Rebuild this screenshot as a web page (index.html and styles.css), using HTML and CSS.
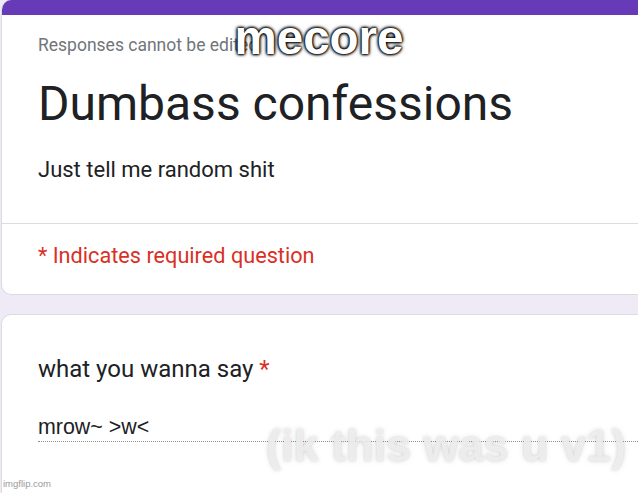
FILE: index.html
```html
<!DOCTYPE html>
<html>
<head>
<meta charset="utf-8">
<link rel="stylesheet" href="styles.css">
</head>
<body>
<div class="page">
  <section class="card header-card">
    <div class="accent"></div>
    <div class="header-body">
      <p class="notice">Responses cannot be edited</p>
      <h1 class="title">Dumbass confessions</h1>
      <p class="desc">Just tell me random shit</p>
    </div>
    <div class="required-row">
      <span class="required">* Indicates required question</span>
    </div>
  </section>
  <section class="card question-card">
    <div class="question">what you wanna say <span class="star">*</span></div>
    <div class="answer">mrow~ &gt;w&lt;</div>
  </section>
</div>
<div class="meme-top">mecore</div>
<div class="meme-bottom">(ik this was u v1)</div>
<div class="watermark">imgflip.com</div>
</body>
</html>
```
FILE: styles.css
```css
html, body {
  margin: 0;
  padding: 0;
}
body {
  width: 638px;
  height: 493px;
  overflow: hidden;
  background: #eeebf7;
  font-family: Roboto, "Liberation Sans", Arial, sans-serif;
  position: relative;
}
.page {
  display: flex;
  flex-direction: column;
  gap: 19px;
  padding-left: 1px;
}
.card {
  background: #fff;
  border: 1px solid #dadce0;
  border-right: none;
  margin-right: -20px;
}
.header-card {
  border-top: none;
  border-radius: 10px 0 0 10px;
  overflow: hidden;
  height: 295px;
  box-sizing: border-box;
  flex: none;
}
.accent {
  height: 15px;
  background: #673ab7;
}
.header-body {
  box-sizing: border-box;
  height: 209px;
  padding: 20px 36px 0 36px;
  border-bottom: 1px solid #dadce0;
}
.notice {
  margin: 0;
  font-size: 17.5px;
  color: #70757a;
  line-height: 20px;
  white-space: nowrap;
}
.title {
  margin: 23px 0 0 0;
  font-weight: 400;
  font-size: 48px;
  line-height: 52px;
  color: #202124;
  white-space: nowrap;
}
.desc {
  margin: 26px 0 0 0;
  font-size: 22px;
  line-height: 28px;
  color: #202124;
}
.required-row {
  padding: 18px 36px 0 36px;
  line-height: 28px;
}
.required {
  font-size: 21.7px;
  line-height: 28px;
  color: #d93025;
}
.question-card {
  border-bottom: none;
  border-radius: 10px 0 0 0;
  height: 200px;
  padding: 39px 0 0 36px;
  flex: none;
}
.question {
  font-size: 24px;
  line-height: 30px;
  color: #202124;
}
.star {
  color: #d93025;
}
.answer {
  margin-top: 31px;
  font-family: "Liberation Sans", Arial, sans-serif;
  font-size: 21.4px;
  line-height: 24px;
  color: #202124;
  padding-bottom: 2px;
  border-bottom: 1px dotted #8f8f8f;
}
.meme-top {
  position: absolute;
  top: 13px;
  left: 0;
  width: 638px;
  text-align: center;
  font-family: "Liberation Sans", Arial, sans-serif;
  font-weight: 700;
  font-size: 47.5px;
  line-height: 50px;
  color: #fff;
  text-shadow: 0 0 3px #000, 0 0 3px #000, 0 0 4px #000, 0 0 2px #000;
}
.meme-bottom {
  position: absolute;
  top: 421px;
  left: 266px;
  white-space: nowrap;
  font-family: "Liberation Sans", Arial, sans-serif;
  font-weight: 700;
  font-size: 45px;
  line-height: 50px;
  color: rgba(240, 240, 240, 0.9);
  text-shadow: 0 0 3px rgba(0,0,0,0.13), 0 0 6px rgba(0,0,0,0.1);
}
.watermark {
  position: absolute;
  left: 3px;
  top: 478px;
  font-family: "Liberation Sans", Arial, sans-serif;
  font-size: 9.5px;
  line-height: 12px;
  color: #9a9a9a;
}
```
